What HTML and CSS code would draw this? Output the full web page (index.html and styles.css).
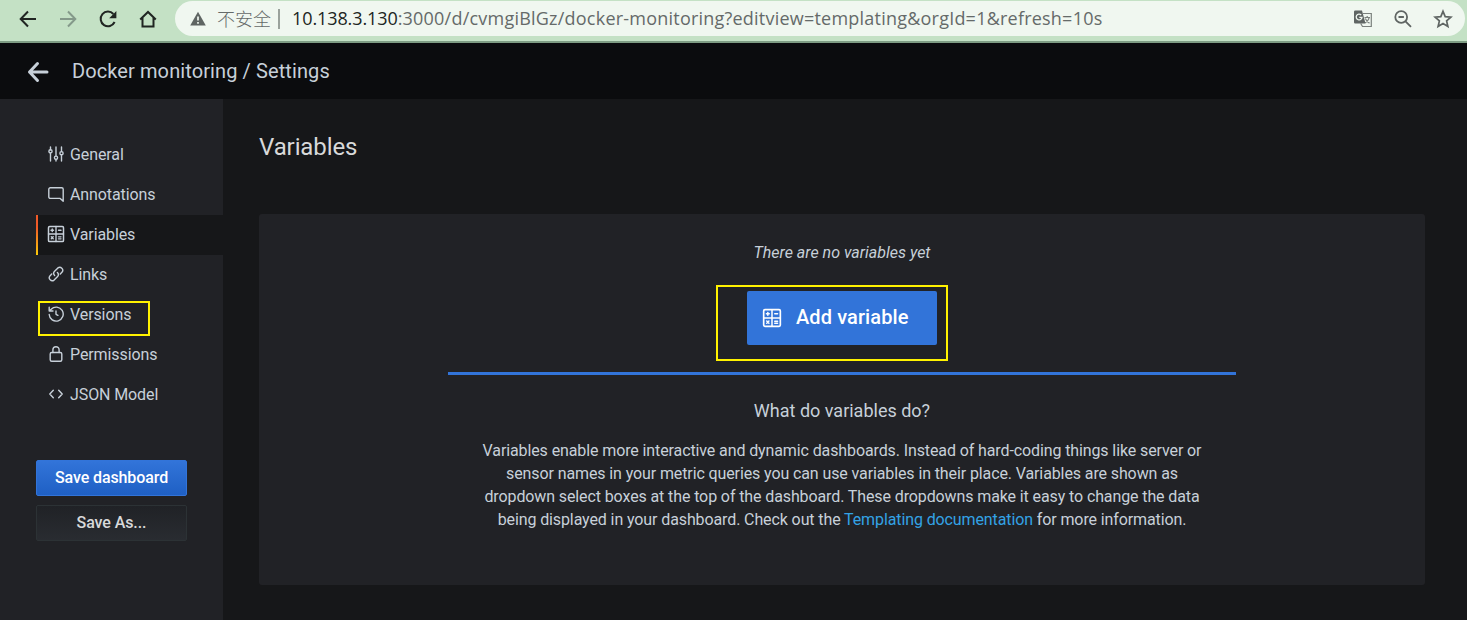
FILE: index.html
```html
<!DOCTYPE html>
<html lang="en">
<head>
<meta charset="utf-8">
<title>Docker monitoring / Settings</title>
<link rel="stylesheet" href="styles.css">
</head>
<body>
<svg width="0" height="0" class="defs">
  <symbol id="calc" viewBox="0 0 24 24">
    <g fill="none" stroke="currentColor" stroke-linecap="round">
      <rect x="2" y="2" width="20" height="20" rx="1.5" stroke-width="2"/>
      <path d="M12 2v20M2 12h20" stroke-width="1.8"/>
      <path d="M5.3 7h3.4M7 5.3v3.4M15.3 7h3.4M5.7 15.7l2.6 2.6M8.3 15.7l-2.6 2.6M15.3 15.8h3.4M15.3 18.4h3.4" stroke-width="1.8"/>
    </g>
  </symbol>
</svg>
<header class="browser">
  <svg class="tool" viewBox="0 0 20 20"><path d="M18 10H3M10 2.5L2.7 10l7.3 7.5"/></svg>
  <svg class="tool dim" viewBox="0 0 20 20"><path d="M2 10h15M10 2.5l7.3 7.5-7.3 7.5"/></svg>
  <svg class="tool" viewBox="0 0 20 20"><path d="M16.6 13A7.3 7.3 0 1 1 15.4 5"/><path class="solid" d="M18.4 2v7.2h-7.2z"/></svg>
  <svg class="tool" viewBox="0 0 20 20"><path d="M2.2 10.4L10 3l7.8 7.4M4.5 9v8.5h11V9"/></svg>
  <div class="omnibox">
    <svg class="warning" viewBox="0 0 16 15"><path fill="#5f6563" d="M8 .8L15.8 14.5H.2z"/><path d="M8 5.5v4M8 11v1.8" stroke="#f0f7f0" stroke-width="1.7"/></svg>
    <span class="insecure">不安全</span>
    <span class="divider"></span>
    <span class="url"><b>10.138.3.130</b>:3000/d/cvmgiBlGz/docker-monitoring?editview=templating&amp;orgId=1&amp;refresh=10s</span>
    <span class="page-tools">
      <svg viewBox="0 0 20 20"><path fill="none" stroke="#7b817d" stroke-width="1.2" d="M10 4.5h8.3v13H9.5l-1.8-3M11.5 8.5H17M14.2 7v1.5M16.2 8.5c-.5 2.5-2 4.2-4.2 5.2M12.3 9.5c1 2.3 2.5 3.8 4.2 4.6"/><path fill="#5f6563" d="M2.2 1.5H9l3.5 13H2.2A1.2 1.2 0 0 1 1 13.3V2.7a1.2 1.2 0 0 1 1.2-1.2z"/><path fill="none" stroke="#f0f7f0" stroke-width="1.3" d="M8.2 6A2.9 2.9 0 1 0 9 8.4H6.3"/></svg>
      <svg viewBox="0 0 20 20"><g fill="none" stroke="#5f6563" stroke-width="1.8"><circle cx="8.2" cy="8" r="5.9"/><path d="M5.5 8h5.4M12.5 12.3l5.5 5.5"/></g></svg>
      <svg viewBox="0 0 20 20"><path fill="none" stroke="#5f6563" stroke-width="1.7" d="M10 2.3l2.2 5.3 5.7.5-4.3 3.8 1.3 5.6-4.9-3-4.9 3 1.3-5.6L2.1 8.1l5.7-.5z"/></svg>
    </span>
  </div>
</header>
<div class="topbar">
  <svg class="back" viewBox="0 0 22 22"><path d="M20 11H2.5M10.500 2.500L2.500 11l8 8.500"/></svg>
  <h1>Docker monitoring / Settings</h1>
</div>
<div class="layout">
  <aside class="sidebar">
    <nav>
      <a class="item"><svg viewBox="0 0 16 16"><path d="M2.5 1v2.7M2.5 7v8M8 1v9M8 13.4v1.6M13.5 1v4.5M13.5 9v6"/><circle cx="2.5" cy="5.3" r="1.6"/><circle cx="8" cy="11.7" r="1.6"/><circle cx="13.5" cy="7.2" r="1.6"/></svg><span>General</span></a>
      <a class="item"><svg viewBox="0 0 16 16"><path d="M15.2 15.2l-3-2.8H2.3A1.5 1.5 0 0 1 .8 10.900V3.200a1.500 1.500 0 0 1 1.500-1.500h11.400a1.500 1.500 0 0 1 1.500 1.500z"/></svg><span>Annotations</span></a>
      <a class="item active"><svg class="calc" viewBox="0 0 24 24"><use href="#calc"/></svg><span>Variables</span></a>
      <a class="item"><svg viewBox="0 0 16 16"><path d="M6.600 9.400a3 3 0 0 1 0-4.200l3.300-3.300a3 3 0 0 1 4.200 4.200l-1.800 1.800M9.400 6.600a3 3 0 0 1 0 4.200l-3.300 3.300a3 3 0 0 1-4.200-4.200l1.800-1.800"/></svg><span>Links</span></a>
      <a class="item marked"><svg viewBox="0 0 16 16"><path d="M1.200 8.500A7 7 0 1 0 3.200 3.200L1.600 4.700M1.200 1.200v3.800h3.800M8 5v3.300l1.900 1"/></svg><span>Versions</span></a>
      <a class="item"><svg viewBox="0 0 16 16"><rect x="2.200" y="6.500" width="11.600" height="8.700" rx="1.500"/><path d="M4.900 6.500V3.800a3.100 3.100 0 0 1 6.200 0v2.700"/></svg><span>Permissions</span></a>
      <a class="item"><svg viewBox="0 0 16 16"><path d="M5.300 4.200L1.800 8l3.500 3.800M10.700 4.200l3.500 3.800-3.500 3.800"/></svg><span>JSON Model</span></a>
    </nav>
    <button class="btn primary">Save dashboard</button>
    <button class="btn">Save As...</button>
  </aside>
  <main>
    <h2>Variables</h2>
    <section class="card">
      <p class="empty">There are no variables yet</p>
      <div class="highlight"><button class="add"><svg viewBox="0 0 24 24"><use href="#calc"/></svg><span>Add variable</span></button></div>
      <div class="info">
        <h3>What do variables do?</h3>
        <p>Variables enable more interactive and dynamic dashboards. Instead of hard-coding things like server or<br>sensor names in your metric queries you can use variables in their place. Variables are shown as<br>dropdown select boxes at the top of the dashboard. These dropdowns make it easy to change the data<br>being displayed in your dashboard. Check out the <a>Templating documentation</a> for more information.</p>
      </div>
    </section>
  </main>
</div>
</body>
</html>
```
FILE: styles.css
```css
*, *::before, *::after { box-sizing: border-box; }
body { margin: 0; height: 620px; overflow: hidden; display: flex; flex-direction: column; background: #161719; color: #c7d0d9; font: 16px/23px Roboto, sans-serif; }
h1, h2, h3, p { margin: 0; font-weight: 400; }
.defs { position: absolute; }
.browser { height: 43px; flex: none; display: flex; align-items: flex-start; padding: 1px 2px 0 18px; background: #c4e1c5; border-bottom: 2px solid #7f9d84; }
.tool { width: 20px; height: 20px; margin: 8px 20px 0 0; fill: none; stroke: #202522; stroke-width: 2; }
.tool .solid { fill: #202522; stroke: none; }
.tool.dim { stroke: #84998a; }
.omnibox { flex: 1; margin-left: -3px; height: 35px; border-radius: 18px; background: #f0f7f0; display: flex; align-items: center; padding: 0 12px 0 15px; white-space: nowrap; color: #656a69; }
.warning { width: 16px; height: 15px; }
.insecure { font: 300 18px/24px "Noto Sans CJK SC", sans-serif; margin: 0 0 2px 11px; width: 54px; }
.divider { width: 2px; height: 20px; background: #9aa29c; margin: 0 12px 0 7px; }
.url { font: 18px/24px "Open Sans", sans-serif; letter-spacing: .22px; margin-bottom: 2px; }
.url b { font-weight: 400; color: #202522; letter-spacing: -.1px; }
.page-tools { margin-left: auto; display: flex; gap: 20px; }
.page-tools svg { width: 20px; height: 20px; }
.topbar { height: 56px; flex: none; display: flex; align-items: center; background: #0b0c0e; padding-left: 27px; }
.back { width: 22px; height: 22px; margin-right: 23px; fill: none; stroke: #c7d0d9; stroke-width: 3; stroke-linecap: round; stroke-linejoin: round; margin-top: 2px; }
h1 { font-size: 20px; line-height: 28px; letter-spacing: .1px; }
.layout { flex: 1; display: flex; min-height: 0; }
.sidebar { width: 223px; background: #212226; padding: 36px 0 0 36px; }
.item { height: 40px; display: flex; align-items: center; gap: 6px; padding: 0 0 2px 12px; position: relative; letter-spacing: -.1px; }
.item svg { width: 16px; height: 16px; fill: none; stroke: #c7d0d9; stroke-width: 1.4; stroke-linecap: round; stroke-linejoin: round; }
.item .calc { width: 18px; height: 18px; margin: 0 -1px; stroke: none; }
.item.active { background: #161719; }
.item.active::before { content: ""; position: absolute; left: 0; top: 0; width: 2px; height: 40px; background: linear-gradient(#f05a28 30%, #fbca0a); }
.item.marked::after { content: ""; position: absolute; left: 2px; top: 6px; width: 112px; height: 35px; border: 2px solid #fff200; }
.btn { display: block; width: 151px; height: 36px; padding: 0; border: 1px solid #2c3235; border-radius: 2px; background: linear-gradient(#202226, #292c31); color: #d8d9da; font: 500 16px/22px Roboto, sans-serif; letter-spacing: -.1px; margin-top: 9px; }
.btn.primary { margin-top: 45px; color: #fff; background: linear-gradient(#3274d9, #1f60c4); border-color: #3274d9; }
main { flex: 1; padding: 32px 42px 0 36px; }
h2 { font-size: 24px; line-height: 32px; color: #d8d9da; letter-spacing: -.1px; }
.card { margin-top: 51px; height: 371px; border-radius: 3px; background: #212226; display: flex; flex-direction: column; align-items: center; padding-top: 27px; text-align: center; }
.empty { font-style: italic; }
.highlight { width: 232px; height: 76px; margin: 21px 0 0 -20px; border: 2px solid #fff200; padding: 4px 0 0 29px; }
.add { width: 190px; height: 54px; padding: 0 0 0 15px; border: 0; border-radius: 2px; background: #3274d9; color: #fff; display: flex; align-items: center; font: 500 20px/28px Roboto, sans-serif; letter-spacing: .1px; }
.add span { padding-bottom: 2px; }
.add svg { width: 20px; height: 20px; margin-right: 14px; }
.info { width: 788px; margin-top: 11px; border-top: 3px solid #3274d9; padding-top: 24px; }
h3 { font-size: 18px; line-height: 24px; margin-bottom: 16px; }
.info p { white-space: nowrap; letter-spacing: -.11px; }
.info a { color: #33a2e5; }
```
